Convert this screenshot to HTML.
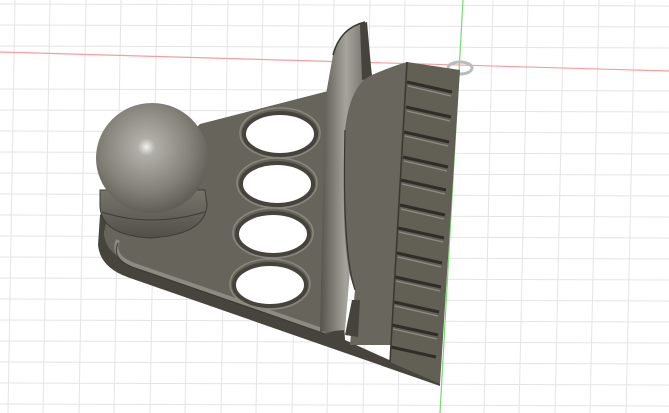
<!DOCTYPE html>
<html><head><meta charset="utf-8"><style>
html,body{margin:0;padding:0;background:#fff;}
svg{display:block}
</style></head><body>
<svg width="669" height="413" viewBox="0 0 669 413" xmlns="http://www.w3.org/2000/svg">
<defs>
<radialGradient id="ball" cx="0.45" cy="0.4" r="0.65">
<stop offset="0" stop-color="#f2f2f0"/>
<stop offset="0.12" stop-color="#b0aea8"/>
<stop offset="0.6" stop-color="#85827a"/>
<stop offset="1" stop-color="#58554e"/>
</radialGradient>
<linearGradient id="chan" x1="0" x2="1">
<stop offset="0" stop-color="#55524a"/>
<stop offset="0.5" stop-color="#a6a49d"/>
<stop offset="1" stop-color="#66635a"/>
</linearGradient>
<linearGradient id="neck" x1="0" y1="0" x2="0" y2="1">
<stop offset="0" stop-color="#77746b"/>
<stop offset="0.5" stop-color="#65625a"/>
<stop offset="1" stop-color="#524f48"/>
</linearGradient>
</defs>
<rect width="669" height="413" fill="#fff"/>
<g stroke="#e4e4e4" stroke-width="1">
<path d="M0 4 L669 6 M0 25 L669 27 M0 46 L669 48 M0 89 L669 91 M0 110 L669 112 M0 131 L669 133 M0 152 L669 154 M0 173 L669 175 M0 194 L669 196 M0 215 L669 217 M0 236 L669 238 M0 257 L669 259 M0 278 L669 280 M0 299 L669 301 M0 320 L669 322 M0 341 L669 343 M0 362 L669 364 M0 383 L669 385 M0 404 L669 406"/>
<path d="M15 0 L8 413 M50 0 L43 413 M86 0 L79 413 M121 0 L114 413 M157 0 L150 413 M192 0 L185 413 M228 0 L221 413 M263 0 L256 413 M299 0 L292 413 M334 0 L327 413 M370 0 L363 413 M405 0 L398 413 M493 0 L484 413 M528 0 L519 413 M564 0 L555 413 M599 0 L590 413 M635 0 L626 413"/>
</g>
<path d="M0 52 L669 71" stroke="#f0a0a0" stroke-width="1.2"/>
<path d="M463 0 L440 413" stroke="#7ad67a" stroke-width="1.2"/>
<ellipse cx="460" cy="68" rx="12" ry="6" fill="none" stroke="#bbb" stroke-width="3"/>

<path d="M200 126 L332 92 L345 340 L440 383 L440 386 L130 278 Q100 268 98 245 L100 215 Z" fill="#47443d"/>
<path d="M200 124 L332 90 L338 330 L325 334 L138 266 Q104 255 104 232 L108 215 Z" fill="#67645b"/>
<path d="M118 240 Q110 258 140 267 L325 331" fill="none" stroke="#8d8a82" stroke-width="4"/>
<path d="M118 240 Q110 258 140 267 L325 331" fill="none" stroke="#3e3b35" stroke-width="1" transform="translate(0,3)"/>
<g fill="#fff" stroke="#46433c" stroke-width="4">
<ellipse cx="280" cy="134" rx="36" ry="21"/>
<ellipse cx="277" cy="184" rx="36" ry="21"/>
<ellipse cx="273" cy="234" rx="36" ry="21"/>
<ellipse cx="270" cy="285" rx="36" ry="21"/>
</g>
<g fill="none" stroke="#8a877f" stroke-width="1.5">
<ellipse cx="280" cy="133" rx="40" ry="25"/>
<ellipse cx="277" cy="183" rx="40" ry="25"/>
<ellipse cx="273" cy="233" rx="40" ry="25"/>
<ellipse cx="270" cy="284" rx="40" ry="25"/>
</g>
<path d="M333 55 Q340 28 365 22 L372 75 L350 270 L345 330 L320 332 L325 100 Z" fill="url(#chan)"/>
<path d="M333 55 Q340 28 365 22" fill="none" stroke="#3a3731" stroke-width="1.5"/>
<path d="M360 24 L367 22 L372 78 L362 80 Z" fill="#46433c"/>
<path d="M372 75 Q395 65 408 62 L392 345 L350 345 L355 290 Q340 260 345 130 Q350 85 372 75 Z" fill="#69665d"/>
<path d="M345 130 Q342 250 355 290" fill="none" stroke="#3a3731" stroke-width="1.2"/>
<path d="M352 300 L345 335 L358 337 L360 300 Z" fill="#46433c"/>
<path d="M407 62 L460 70 L440 384 L390 362 Z" fill="#625f55"/>
<g stroke="#302d28" stroke-width="3" fill="none">
<path d="M407 82 L452 92"/><path d="M406 107 L451 117"/><path d="M404 132 L449 142"/><path d="M403 157 L448 167"/><path d="M401 180 L446 190"/><path d="M400 205 L445 215"/><path d="M398 228 L444 238"/><path d="M397 253 L442 263"/><path d="M395 277 L441 287"/><path d="M394 302 L439 312"/><path d="M392 325 L438 335"/><path d="M391 347 L436 357"/>
</g>
<g stroke="#8f8c84" stroke-width="1.2" fill="none">
<path d="M408 86 L451 96"/><path d="M407 111 L450 121"/><path d="M405 136 L448 146"/><path d="M404 161 L447 171"/><path d="M402 184 L445 194"/><path d="M401 209 L444 219"/><path d="M399 232 L443 242"/><path d="M398 257 L441 267"/><path d="M396 281 L440 291"/><path d="M395 306 L438 316"/><path d="M393 329 L437 339"/>
</g>
<path d="M407 62 L390 362" stroke="#3a3731" stroke-width="1.5"/>
<path d="M100 205 Q100 235 150 238 Q205 235 207 205 L205 190 L100 190 Z" fill="url(#neck)" stroke="#3e3b35" stroke-width="1"/>
<path d="M102 212 Q150 228 205 212" fill="none" stroke="#3e3b35" stroke-width="1"/>
<ellipse cx="152" cy="158" rx="56" ry="55" fill="url(#ball)"/>
</svg>
</body></html>
